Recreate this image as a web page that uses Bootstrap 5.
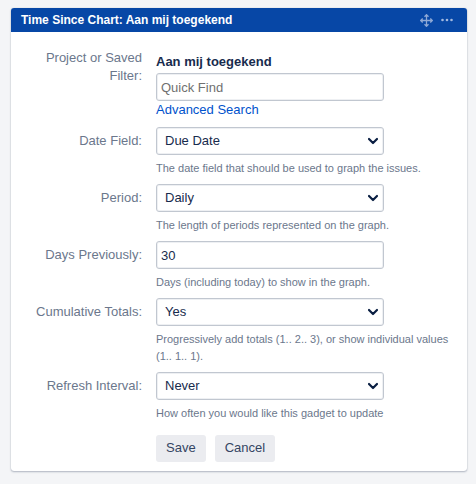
<!DOCTYPE html>
<html lang="en">
<head>
<meta charset="utf-8">
<meta name="viewport" content="width=device-width, initial-scale=1">
<title>Time Since Chart</title>
<link href="https://cdn.jsdelivr.net/npm/bootstrap@5.3.0/dist/css/bootstrap.min.css" rel="stylesheet">
<style>
  body { background: #f4f5f7; color: #172b4d; font: 13px/18px "Liberation Sans", Arial, sans-serif; padding: 8px 9px 8px 11px; }
  .gadget { border-radius: 3px; box-shadow: 0 1px 2px rgba(9,30,66,.28), 0 0 1px rgba(9,30,66,.25); padding-bottom: 9px; }
  .gadget-head { background: #0747a6; color: #fff; height: 24px; padding: 0 14px 0 10px; border-radius: 3px 3px 0 0; }
  .gadget-head h1 { font-size: 12px; line-height: 18px; font-weight: 700; }
  .tool { color: #a3b9df; line-height: 0; }
  .gadget-form { padding: 17px 16px 0 16px; }
  .field-row { display: grid; grid-template-columns: 115px minmax(0, 1fr); column-gap: 14px; margin-bottom: 7px; }
  .field-label { color: #6b778c; text-align: right; padding-top: 5px; }
  .first-row { margin-bottom: 8px; }
  .first-row .field-label { padding-top: 0; }
  .first-row .field-area { padding-top: 4px; }
  .field-box { width: 228px; max-width: 100%; height: 28px; margin-bottom: -1px; padding: 0 4px; border: 1px solid #c1c7d0; border-radius: 3px; font-size: 13px; line-height: 18px; color: #172b4d; box-shadow: inset 0 0 0 1px #eef0f3; }
  .first-row .field-box { margin-bottom: 0; }
  .field-box::placeholder { color: #707070; opacity: 1; }
  select.field-box { padding: 0 24px 0 8px; background-position: right 4px center; background-size: 12px 12px;
    background-image: url("data:image/svg+xml,%3Csvg xmlns='http://www.w3.org/2000/svg' viewBox='0 0 12 12'%3E%3Cpath d='M2 4l4 4 4-4' fill='none' stroke='%23091e42' stroke-width='2.2' stroke-linecap='round' stroke-linejoin='round'/%3E%3C/svg%3E"); }
  .help { color: #6b778c; font-size: 11px; line-height: 17px; padding-top: 6px; }
  .filter-name { margin-bottom: 2px; }
  .search-link { color: #0052cc; }
  .actions { padding-top: 6px; gap: 9px; }
  .act { background: #ebecf0; color: #344563; border-radius: 3px; font-size: 13px; line-height: 18px; padding: 4px 10px 5px; border: 0; }
</style>
<script src="https://cdn.jsdelivr.net/npm/bootstrap@5.3.0/dist/js/bootstrap.bundle.min.js"></script>
</head>
<body>
<main class="gadget bg-white">
  <header class="gadget-head d-flex align-items-center justify-content-between">
    <h1 class="m-0">Time Since Chart: Aan mij toegekend</h1>
    <div class="d-flex align-items-center gap-2">
      <button type="button" class="tool btn p-0 border-0" aria-label="Move">
        <svg width="13" height="13" viewBox="0 0 13 13" fill="none" stroke="#8ea9d6" stroke-width="1.3"><path d="M6.500 1v11M1 6.500h11M4.500 2.700l2-2 2 2M4.500 10.300l2 2 2-2M2.700 4.500l-2 2 2 2M10.300 4.500l2 2-2 2"/></svg>
      </button>
      <button type="button" class="tool btn p-0 border-0" aria-label="More actions">
        <svg width="12" height="13" viewBox="0 0 12 13" fill="#a3b9df"><circle cx="1.500" cy="6" r="1.300"/><circle cx="6" cy="6" r="1.300"/><circle cx="10.500" cy="6" r="1.300"/></svg>
      </button>
    </div>
  </header>
  <form class="gadget-form">
    <div class="field-row first-row">
      <label class="field-label" for="filter">Project or Saved Filter:</label>
      <div class="field-area">
        <div class="filter-name fw-bold">Aan mij toegekend</div>
        <input id="filter" class="form-control field-box" type="text" placeholder="Quick Find">
        <a href="#" class="search-link d-inline-block text-decoration-none">Advanced Search</a>
      </div>
    </div>
    <div class="field-row">
      <label class="field-label" for="date">Date Field:</label>
      <div>
        <select id="date" class="form-select field-box"><option>Due Date</option></select>
        <div class="help">The date field that should be used to graph the issues.</div>
      </div>
    </div>
    <div class="field-row">
      <label class="field-label" for="period">Period:</label>
      <div>
        <select id="period" class="form-select field-box"><option>Daily</option></select>
        <div class="help">The length of periods represented on the graph.</div>
      </div>
    </div>
    <div class="field-row">
      <label class="field-label" for="days">Days Previously:</label>
      <div>
        <input id="days" class="form-control field-box" type="text" value="30">
        <div class="help">Days (including today) to show in the graph.</div>
      </div>
    </div>
    <div class="field-row">
      <label class="field-label" for="totals">Cumulative Totals:</label>
      <div>
        <select id="totals" class="form-select field-box"><option>Yes</option></select>
        <div class="help">Progressively add totals (1.. 2.. 3), or show individual values (1.. 1.. 1).</div>
      </div>
    </div>
    <div class="field-row">
      <label class="field-label" for="refresh">Refresh Interval:</label>
      <div>
        <select id="refresh" class="form-select field-box"><option>Never</option></select>
        <div class="help">How often you would like this gadget to update</div>
      </div>
    </div>
    <div class="field-row mb-0">
      <div></div>
      <div class="actions d-flex">
        <button type="button" class="btn act">Save</button>
        <button type="button" class="btn act">Cancel</button>
      </div>
    </div>
  </form>
</main>
</body>
</html>
